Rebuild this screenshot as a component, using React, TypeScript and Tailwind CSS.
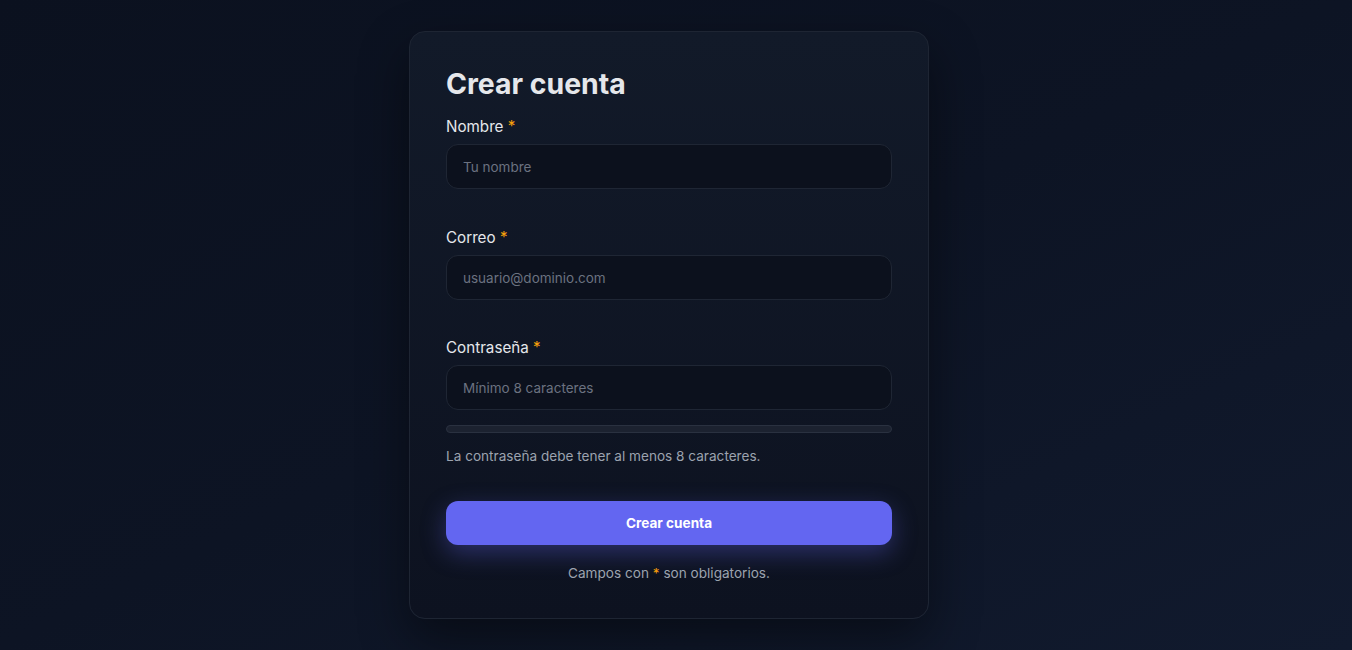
import { useState } from "react";

function Field({
  label,
  placeholder,
  type = "text",
  value,
  onChange,
}: {
  label: string;
  placeholder: string;
  type?: string;
  value: string;
  onChange: (v: string) => void;
}) {
  return (
    <div>
      <label className="block text-[15.2px] leading-6 text-[#e5e7eb]">
        {label} <span className="text-[#f59e0b]">*</span>
      </label>
      <input
        type={type}
        value={value}
        onChange={(e) => onChange(e.target.value)}
        placeholder={placeholder}
        className="mt-[5px] block h-[45px] w-full rounded-xl border border-[#1f2634] bg-[#0c111d] px-4 text-[13.5px] text-[#e5e7eb] placeholder-[#6b7280] outline-none focus:border-[#6366f1]"
      />
    </div>
  );
}

export default function App() {
  const [name, setName] = useState("");
  const [email, setEmail] = useState("");
  const [password, setPassword] = useState("");

  return (
    <div
      className="flex min-h-screen items-center justify-center bg-gradient-to-br from-[#0b111f] via-[#0d1424] to-[#111a2e] pr-[14px]"
      style={{ fontFamily: "Inter, 'Noto Sans', sans-serif" }}
    >
      {/* Card */}
      <div className="w-[520px] rounded-2xl border border-[#1e2533] bg-gradient-to-b from-[#121a29] to-[#0d1220] px-9 pt-9 pb-[35px] shadow-[0_20px_50px_rgba(0,0,0,0.45)]">
        <h1 className="text-[28.4px] font-bold leading-[32px] text-[#e5e7eb]">Crear cuenta</h1>

        <div className="mt-[15px]">
          <Field label="Nombre" placeholder="Tu nombre" value={name} onChange={setName} />
        </div>
        <div className="mt-[37px]">
          <Field
            label="Correo"
            placeholder="usuario@dominio.com"
            type="email"
            value={email}
            onChange={setEmail}
          />
        </div>
        <div className="mt-[36px]">
          <Field
            label="Contraseña"
            placeholder="Mínimo 8 caracteres"
            type="password"
            value={password}
            onChange={setPassword}
          />
        </div>

        {/* Strength bar */}
        <div className="mt-[15px] h-2 w-full overflow-hidden rounded-full border border-[#2a3140] bg-[#1c2230]">
          <div
            className="h-full bg-[#6366f1]"
            style={{ width: `${Math.min(100, (password.length / 8) * 100)}%` }}
          />
        </div>
        <p className="mt-[13px] text-[13.6px] leading-5 text-[#9ca3af]">
          La contraseña debe tener al menos 8 caracteres.
        </p>

        <button className="mt-[35px] h-11 w-full rounded-xl bg-[#6366f1] text-[13.6px] font-bold text-white shadow-[0_8px_24px_rgba(99,102,241,0.35)]">
          Crear cuenta
        </button>

        <p className="mt-[18px] text-center text-[13.6px] leading-5 text-[#9ca3af]">
          Campos con <span className="text-[#f59e0b]">*</span> son obligatorios.
        </p>
      </div>
    </div>
  );
}
